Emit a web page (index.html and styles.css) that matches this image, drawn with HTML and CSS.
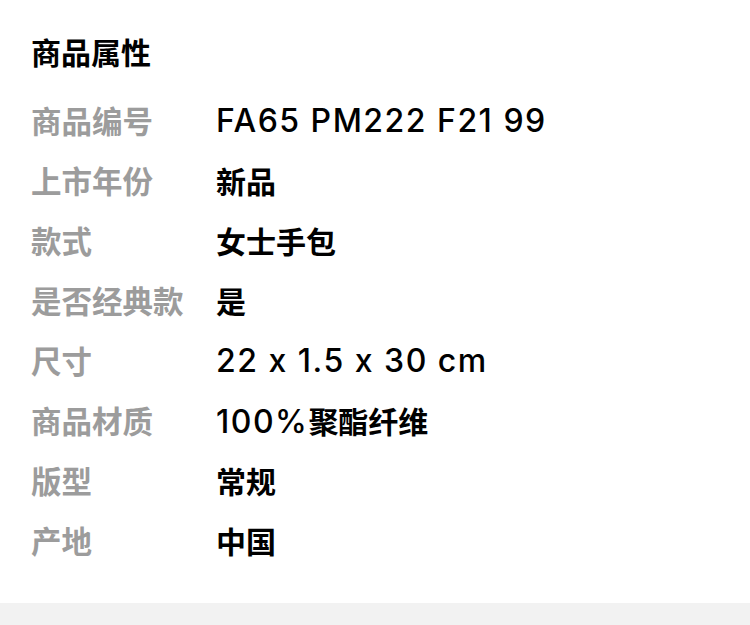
FILE: index.html
```html
<!DOCTYPE html>
<html lang="zh">
<head>
<meta charset="utf-8">
<link rel="stylesheet" href="styles.css">
</head>
<body>
<section class="attrs">
  <h2 class="title">商品属性</h2>
  <div class="list">
    <div class="row"><span class="label">商品编号</span><span class="value latin">FA65 PM222 F21 99</span></div>
    <div class="row"><span class="label">上市年份</span><span class="value">新品</span></div>
    <div class="row"><span class="label">款式</span><span class="value">女士手包</span></div>
    <div class="row"><span class="label">是否经典款</span><span class="value">是</span></div>
    <div class="row"><span class="label">尺寸</span><span class="value latin">22 x 1.5 x 30 cm</span></div>
    <div class="row"><span class="label">商品材质</span><span class="value"><span class="latin">100%</span>聚酯纤维</span></div>
    <div class="row"><span class="label">版型</span><span class="value">常规</span></div>
    <div class="row"><span class="label">产地</span><span class="value">中国</span></div>
  </div>
</section>
<div class="band"></div>
</body>
</html>
```
FILE: styles.css
```css
html, body {
  margin: 0;
  padding: 0;
  background: #ffffff;
}
body {
  font-family: "Noto Sans CJK SC", "Noto Sans", sans-serif;
  color: #000;
}
.attrs {
  padding: 21px 0 33px 31px;
}
.title {
  margin: 0;
  font-size: 30px;
  line-height: 60px;
  font-weight: 700;
  color: #000;
}
.list {
  margin-top: 9px;
  display: flex;
  flex-direction: column;
}
.row {
  display: flex;
  align-items: center;
  height: 60px;
}
.label {
  width: 185px;
  flex: none;
  font-size: 30.5px;
  font-weight: 700;
  color: #9c9c9c;
}
.value {
  font-size: 30px;
  font-weight: 700;
  color: #000;
}
.latin {
  font-family: "Inter", "Noto Sans CJK SC", sans-serif;
  font-weight: 500;
  font-size: 32px;
  letter-spacing: 1.5px;
}
.band {
  height: 22px;
  background: #f2f2f2;
}
```
